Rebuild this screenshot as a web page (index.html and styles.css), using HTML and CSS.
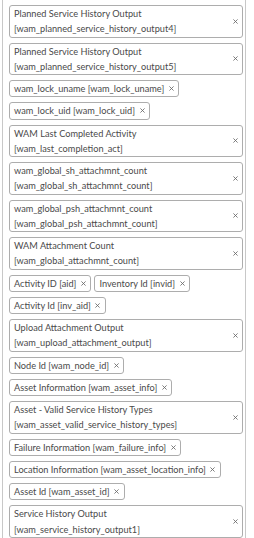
FILE: index.html
```html
<!DOCTYPE html>
<html lang="en">
<head>
    <meta charset="UTF-8">
    <meta name="viewport" content="width=device-width, initial-scale=1.0">
    <title>Selected Outputs</title>
    <link rel="stylesheet" href="styles.css">
</head>
<body>
    <div class="panel">
        <div class="chip-list">
            <span class="chip"><span class="chip-text">Planned Service History Output [wam_planned_service_history_output4]</span><button class="chip-close" title="Remove"><svg viewBox="0 0 6 6"><path d="M0.5 0.5L5.5 5.5M5.5 0.5L0.5 5.5"/></svg></button></span>
            <span class="chip"><span class="chip-text">Planned Service History Output [wam_planned_service_history_output5]</span><button class="chip-close" title="Remove"><svg viewBox="0 0 6 6"><path d="M0.5 0.5L5.5 5.5M5.5 0.5L0.5 5.5"/></svg></button></span>
            <span class="chip"><span class="chip-text">wam_lock_uname [wam_lock_uname]</span><button class="chip-close" title="Remove"><svg viewBox="0 0 6 6"><path d="M0.5 0.5L5.5 5.5M5.5 0.5L0.5 5.5"/></svg></button></span>
            <span class="chip"><span class="chip-text">wam_lock_uid [wam_lock_uid]</span><button class="chip-close" title="Remove"><svg viewBox="0 0 6 6"><path d="M0.5 0.5L5.5 5.5M5.5 0.5L0.5 5.5"/></svg></button></span>
            <span class="chip"><span class="chip-text">WAM Last Completed Activity [wam_last_completion_act]</span><button class="chip-close" title="Remove"><svg viewBox="0 0 6 6"><path d="M0.5 0.5L5.5 5.5M5.5 0.5L0.5 5.5"/></svg></button></span>
            <span class="chip"><span class="chip-text">wam_global_sh_attachmnt_count [wam_global_sh_attachmnt_count]</span><button class="chip-close" title="Remove"><svg viewBox="0 0 6 6"><path d="M0.5 0.5L5.5 5.5M5.5 0.5L0.5 5.5"/></svg></button></span>
            <span class="chip"><span class="chip-text">wam_global_psh_attachmnt_count [wam_global_psh_attachmnt_count]</span><button class="chip-close" title="Remove"><svg viewBox="0 0 6 6"><path d="M0.5 0.5L5.5 5.5M5.5 0.5L0.5 5.5"/></svg></button></span>
            <span class="chip"><span class="chip-text">WAM Attachment Count [wam_global_attachmnt_count]</span><button class="chip-close" title="Remove"><svg viewBox="0 0 6 6"><path d="M0.5 0.5L5.5 5.5M5.5 0.5L0.5 5.5"/></svg></button></span>
            <span class="chip"><span class="chip-text">Activity ID [aid]</span><button class="chip-close" title="Remove"><svg viewBox="0 0 6 6"><path d="M0.5 0.5L5.5 5.5M5.5 0.5L0.5 5.5"/></svg></button></span>
            <span class="chip"><span class="chip-text">Inventory Id [invid]</span><button class="chip-close" title="Remove"><svg viewBox="0 0 6 6"><path d="M0.5 0.5L5.5 5.5M5.5 0.5L0.5 5.5"/></svg></button></span>
            <span class="chip"><span class="chip-text">Activity Id [inv_aid]</span><button class="chip-close" title="Remove"><svg viewBox="0 0 6 6"><path d="M0.5 0.5L5.5 5.5M5.5 0.5L0.5 5.5"/></svg></button></span>
            <span class="chip"><span class="chip-text">Upload Attachment Output [wam_upload_attachment_output]</span><button class="chip-close" title="Remove"><svg viewBox="0 0 6 6"><path d="M0.5 0.5L5.5 5.5M5.5 0.5L0.5 5.5"/></svg></button></span>
            <span class="chip"><span class="chip-text">Node Id [wam_node_id]</span><button class="chip-close" title="Remove"><svg viewBox="0 0 6 6"><path d="M0.5 0.5L5.5 5.5M5.5 0.5L0.5 5.5"/></svg></button></span>
            <span class="chip"><span class="chip-text">Asset Information [wam_asset_info]</span><button class="chip-close" title="Remove"><svg viewBox="0 0 6 6"><path d="M0.5 0.5L5.5 5.5M5.5 0.5L0.5 5.5"/></svg></button></span>
            <span class="chip"><span class="chip-text">Asset - Valid Service History Types [wam_asset_valid_service_history_types]</span><button class="chip-close" title="Remove"><svg viewBox="0 0 6 6"><path d="M0.5 0.5L5.5 5.5M5.5 0.5L0.5 5.5"/></svg></button></span>
            <span class="chip"><span class="chip-text">Failure Information [wam_failure_info]</span><button class="chip-close" title="Remove"><svg viewBox="0 0 6 6"><path d="M0.5 0.5L5.5 5.5M5.5 0.5L0.5 5.5"/></svg></button></span>
            <span class="chip"><span class="chip-text">Location Information [wam_asset_location_info]</span><button class="chip-close" title="Remove"><svg viewBox="0 0 6 6"><path d="M0.5 0.5L5.5 5.5M5.5 0.5L0.5 5.5"/></svg></button></span>
            <span class="chip"><span class="chip-text">Asset Id [wam_asset_id]</span><button class="chip-close" title="Remove"><svg viewBox="0 0 6 6"><path d="M0.5 0.5L5.5 5.5M5.5 0.5L0.5 5.5"/></svg></button></span>
            <span class="chip"><span class="chip-text">Service History Output [wam_service_history_output1]</span><button class="chip-close" title="Remove"><svg viewBox="0 0 6 6"><path d="M0.5 0.5L5.5 5.5M5.5 0.5L0.5 5.5"/></svg></button></span>
        </div>
    </div>
</body>
</html>
```

FILE: styles.css
```css
* {
    margin: 0;
    padding: 0;
    box-sizing: border-box;
}

body {
    font-family: Lato, "Noto Sans", sans-serif;
    background: #fff;
    color: #4a4a4a;
}

.panel {
    width: 244px;
    margin-left: 2px;
    min-height: 560px;
    border-left: 1px solid #c8c8c8;
    border-right: 1px solid #c8c8c8;
    padding: 5px 2px 5px 6px;
}

.chip-list {
    display: flex;
    flex-wrap: wrap;
    gap: 5px 3px;
}

.chip {
    display: inline-flex;
    align-items: center;
    border: 1px solid #adadad;
    border-radius: 3px;
    padding: 0 4px 0 4px;
    font-size: 9.2px;
    line-height: 15.25px;
    background: #fff;
}

.chip-text {
    flex: 1;
}

.chip-close {
    display: flex;
    align-items: center;
    justify-content: center;
    margin-left: 4px;
    width: 6px;
    height: 6px;
    background: none;
    border: none;
    cursor: pointer;
}

.chip-close svg {
    width: 5px;
    height: 5px;
    stroke: #666;
    stroke-width: 1;
    fill: none;
}
```
